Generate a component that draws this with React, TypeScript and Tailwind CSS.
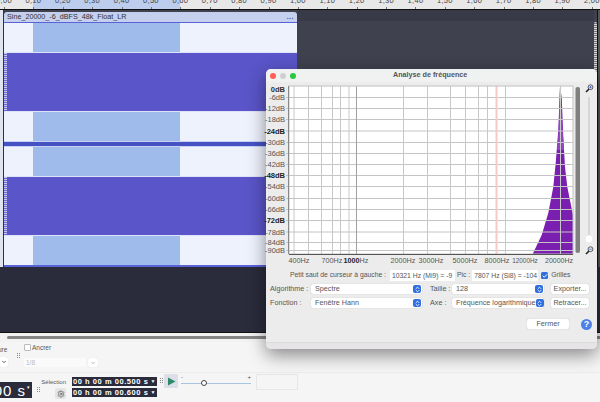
import { ChevronDown, ChevronsUpDown, Check, Settings } from 'lucide-react';

const rulerLabels = ['0,00', '0,10', '0,20', '0,30', '0,40', '0,50', '0,60', '0,70', '0,80', '0,90', '1,00', '1,10', '1,20', '1,30', '1,40', '1,50', '1,60', '1,70', '1,80', '1,90', '2,00'];

const dbLines = [
  { y: 97.5, label: '-6dB' }, { y: 108.5, label: '-12dB' }, { y: 119.5, label: '-18dB' }, { y: 131, label: '-24dB', bold: true },
  { y: 142.5, label: '-30dB' }, { y: 153.5, label: '-36dB' }, { y: 164.5, label: '-42dB' }, { y: 175.5, label: '-48dB', bold: true },
  { y: 186.5, label: '-54dB' }, { y: 198.5, label: '-60dB' }, { y: 209.5, label: '-66dB' }, { y: 220.5, label: '-72dB', bold: true },
  { y: 232, label: '-78dB' }, { y: 242.5, label: '-84dB' }, { y: 250.5, label: '-90dB' },
];

const freqLines = [294, 308.5, 321.5, 332.5, 340.5, 349, 403.5, 427.5, 450.5, 465.5, 478.5, 487.5, 505.5, 560.5];

const freqLabels = [
  { x: 299, label: '400Hz', size: 7.2 }, { x: 332, label: '700Hz', size: 7.2 }, { x: 356, label: '1000', tail: 'Hz', size: 7.2 }, { x: 403, label: '2000Hz', size: 7.2 },
  { x: 431, label: '3000Hz', size: 7.2 }, { x: 465, label: '5000Hz', size: 7.2 }, { x: 497, label: '8000Hz', size: 7.2 }, { x: 525, label: '12000Hz', size: 6.4 }, { x: 559, label: '20000Hz', size: 7 },
];

function Channel() {
  const strip = (
    <div className="flex h-[29px] bg-[#eef2fd]">
      <div className="w-[29px]" />
      <div className="w-[147px] bg-[#9fbbec]" />
    </div>
  );
  return (
    <div className="flex flex-col">
      {strip}
      <div className="h-px bg-[#dfe4fa]" />
      <div className="relative h-[58px] bg-[#5a55c8]">
        <div className="absolute left-0 top-0 h-full w-[3px] bg-[repeating-linear-gradient(to_bottom,#c9c9ee_0,#c9c9ee_1px,#6d69d0_1px,#6d69d0_2px)]" />
      </div>
      <div className="h-px bg-[#dfe4fa]" />
      {strip}
    </div>
  );
}

function MacSelect({ label, value, labelWidth, width }: { label: string; value: string; labelWidth: string; width: string }) {
  return (
    <div className="flex items-center">
      <span className={`${labelWidth} text-[#555]`}>{label}</span>
      <div className={`${width} flex h-[10px] items-center justify-between rounded-[2px] bg-white pl-[4px] pr-[1px] shadow-[0_0_1px_#aaa]`}>
        <span className="whitespace-nowrap text-[#555]">{value}</span>
        <span className="flex h-[8px] w-[8px] shrink-0 items-center justify-center rounded-[2px] bg-[#2f6fe0]">
          <ChevronsUpDown size={7} strokeWidth={3} className="text-white" />
        </span>
      </div>
    </div>
  );
}

function MacButton({ label, width }: { label: string; width: string }) {
  return (
    <div className={`${width} flex h-[10px] items-center justify-center rounded-[2px] bg-white text-[#555] shadow-[0_0_1px_#aaa]`}>
      {label}
    </div>
  );
}

function Grip() {
  return (
    <div className="grid grid-cols-2 gap-[1px]">
      {[0, 1, 2, 3, 4, 5].map((i) => (
        <span key={i} className="h-px w-px bg-[#8a8a8a]" />
      ))}
    </div>
  );
}

function Spectrum() {
  return (
    <svg width="600" height="280" viewBox="0 0 600 280" className="absolute left-[-266px] top-[-69px]" fontFamily="'Liberation Sans', sans-serif" fontSize="7.5">
      <rect x="289" y="86" width="284" height="168" fill="#ffffff" />
      <polygon
        points="560,87 558.3,130 555.7,163 553.3,187 548.3,213 541.7,235 532.7,254 573,254 573,215 567.3,187 565,167 563.3,137 561.7,97"
        fill="#7a1fb0"
      />
      <polygon points="560,87 558.6,130 557,150 564,150 562.6,130 561,97" fill="#9246c4" />
      {dbLines.map((d) => (
        <line key={d.y} x1="286" x2="573" y1={d.y} y2={d.y} stroke="#c4c4c4" />
      ))}
      {freqLines.map((x) => (
        <line key={x} x1={x} x2={x} y1="86" y2="254" stroke="#c8c8c8" />
      ))}
      <line x1="356.5" x2="356.5" y1="86" y2="254" stroke="#a0a0a0" />
      <line x1="496.5" x2="496.5" y1="86" y2="254" stroke="#f7c9c9" strokeWidth="2" />
      <rect x="289" y="86" width="284" height="168" fill="none" stroke="#c0c0c0" />
      <line x1="289" x2="573" y1="254.5" y2="254.5" stroke="#555" />
      <line x1="288.5" x2="288.5" y1="86" y2="254" stroke="#888" />
      <text x="285" y="92" textAnchor="end" fill="#333" fontWeight="bold">0dB</text>
      {dbLines.map((d) => (
        <text key={d.label} x="285" y={d.y + 2.5} textAnchor="end" fill={d.bold ? '#222' : '#555'} fontWeight={d.bold ? 'bold' : 'normal'}>{d.label}</text>
      ))}
      {freqLabels.map((f) => (
        <text key={f.x} x={f.x} y="263" textAnchor="middle" fill="#555" fontSize={f.size}>
          {f.tail ? <tspan fontWeight="bold" fill="#222">{f.label}</tspan> : f.label}
          {f.tail}
        </text>
      ))}
      <rect x="575.5" y="87" width="4.5" height="166" rx="2" fill="#808080" />
      <line x1="589" x2="589" y1="97" y2="240" stroke="#cfcfcf" strokeWidth="1.5" />
      <circle cx="589" cy="239" r="4" fill="#ffffff" stroke="#dddddd" strokeWidth="0.5" />
    </svg>
  );
}

function Magnifier({ minus }: { minus?: boolean }) {
  return (
    <svg width="9" height="9" viewBox="0 0 9 9">
      <line x1="1" y1="8" x2="4" y2="5" stroke="#222" strokeWidth="1.6" />
      <circle cx="5.5" cy="3.2" r="2.4" fill="#e8eefc" stroke="#333" strokeWidth="0.8" />
      <line x1="4.3" y1="3.2" x2="6.7" y2="3.2" stroke="#2546b0" strokeWidth="0.7" />
      {!minus && <line x1="5.5" y1="2" x2="5.5" y2="4.4" stroke="#2546b0" strokeWidth="0.7" />}
    </svg>
  );
}

export default function App() {
  return (
    <div className="relative flex h-[402px] w-[600px] flex-col overflow-hidden bg-[#f5f5f5] font-['Liberation_Sans',sans-serif]">
      {/* time ruler */}
      <div className="relative h-[9px] shrink-0 overflow-hidden bg-[#e8e8e8]">
        <div className="absolute left-[33px] top-0 h-full w-[147px] bg-[#bccdee]" />
        <div className="relative ml-[-10.7px] flex">
          {rulerLabels.map((label) => (
            <div key={label} className="relative flex h-[9px] w-[29.4px] shrink-0 justify-center">
              <span className="mt-[-4px] text-[7.5px] leading-[9px] tracking-[0.3px] text-[#444]">{label}</span>
              <span className="absolute bottom-0 left-1/2 h-[2px] w-px bg-[#777]" />
            </div>
          ))}
        </div>
      </div>

      {/* project area */}
      <div className="flex h-[324px] shrink-0 flex-col border-y border-[#111] bg-[#2a2b3b]">
        <div className="flex h-[257px] bg-[#3f414f]">
          <div className="h-full w-[4px] shrink-0 border-r border-[#333] bg-[#dfe4ef]" />
          <div className="flex w-[293px] shrink-0 flex-col pt-[2px]">
            <div className="flex h-[9.5px] items-center justify-between rounded-t-[3px] bg-[#c5cfee] pl-[3px] pr-[3px]">
              <span className="text-[7.2px] leading-none text-[#333]">Sine_20000_-6_dBFS_48k_Float_LR</span>
              <span className="text-[7px] font-bold leading-none tracking-[0.5px] text-[#555]">...</span>
            </div>
            <div className="h-[1.5px] bg-[#5a62d8]" />
            <Channel />
            <div className="h-[1px] bg-[#c8d0f5]" />
            <div className="h-[4px] bg-[#4552c4]" />
            <div className="h-[1px] bg-[#c8d0f5]" />
            <Channel />
            <div className="h-[2px] bg-[#5a62d8]" />
          </div>
          <div className="flex-1 bg-[#3f414f]">
            <div className="h-[11px] bg-[#383a47]" />
          </div>
          <div className="mt-[12px] h-[245px] w-[3px] shrink-0 rounded-t-[2px] bg-[repeating-linear-gradient(to_bottom,#d5d5d5_0,#d5d5d5_1px,#777_1px,#777_2px)]" />
          <div className="w-[3px] shrink-0 border-l border-[#111] bg-[#555]" />
        </div>
      </div>

      {/* horizontal scrollbar */}
      <div className="flex h-[9px] shrink-0 items-center bg-[#f2f2f2] pl-[7px]">
        <div className="h-[3.5px] w-full rounded-l-[2px] bg-[#858585]" />
      </div>

      {/* toolbars */}
      <div className="flex h-[60px] flex-col text-[6.5px] text-[#555]">
        <div className="flex h-[31px] border-b border-[#ececec]">
          <div className="flex w-[17px] shrink-0 flex-col pt-[4px]">
            <span className="ml-[-2px] leading-[8px]">ure</span>
            <div className="mt-[3px] flex h-[10px] w-[8px] items-center justify-center rounded-r-[2px] bg-white shadow-[0_0_1px_#ccc]">
              <ChevronDown size={6} strokeWidth={3} className="text-[#333]" />
            </div>
          </div>
          <div className="mt-[11px]"><Grip /></div>
          <div className="ml-[4px] flex flex-col">
            <div className="flex items-start pt-[2px]">
              <span className="h-[7px] w-[7px] rounded-[1px] border border-[#bbb] bg-white" />
              <span className="ml-[1px] leading-[8px]">Ancrer</span>
            </div>
            <div className="mt-[6px] flex items-center">
              <div className="flex h-[9px] w-[62px] items-center rounded-[1px] bg-[#fafafa] pl-[2px] text-[#bbb]">1/8</div>
              <div className="ml-[2px] flex h-[9px] w-[10px] items-center justify-center rounded-[2px] bg-white shadow-[0_0_1px_#ccc]">
                <ChevronDown size={6} strokeWidth={2.5} className="text-[#999]" />
              </div>
            </div>
          </div>
        </div>
        <div className="flex flex-1 items-start">
          <div className="mt-[9px] flex h-[16px] w-[32px] shrink-0 items-center justify-end overflow-hidden bg-[#2a2b3b] pr-[1px] text-[15px] leading-none tracking-[1px] text-white">
            <span className="whitespace-nowrap">00 s</span><span className="mb-[6px] ml-[1px] text-[5px]">▾</span>
          </div>
          <div className="ml-[5px] mt-[14px]"><Grip /></div>
          <div className="ml-[3px] mt-[5px] flex w-[26px] shrink-0 flex-col items-end">
            <span className="mr-[3px] text-[6px] leading-[8px] whitespace-nowrap">Sélection</span>
            <div className="mt-[2px] mr-[3px] flex h-[11px] w-[11px] items-center justify-center rounded-[2px] bg-[#e4e4e4]">
              <Settings size={8} className="text-[#555]" />
            </div>
          </div>
          <div className="ml-[3px] mt-[4px] flex w-[85px] shrink-0 flex-col gap-[2px]">
            {['00 h 00 m 00.500 s', '00 h 00 m 00.600 s'].map((time) => (
              <div key={time} className="flex h-[9px] items-center justify-between bg-[#2a2b3b] pl-[1px] pr-[1px] text-[7.5px] font-bold tracking-[0.55px] text-white">
                <span className="whitespace-nowrap">{time}</span>
                <span className="text-[5px]">▼</span>
              </div>
            ))}
          </div>
          <div className="ml-[3px] mt-[5px]"><Grip /></div>
          <div className="ml-[1px] mt-[1px] flex h-[14px] w-[14px] shrink-0 items-center justify-center rounded-[1px] bg-[#dcdfe8]">
            <svg width="9" height="9" viewBox="0 0 9 9"><polygon points="1,0.5 8.5,4.5 1,8.5" fill="#2e8b6a" /></svg>
          </div>
          <div className="relative ml-[3px] mt-[2px] h-[14px] w-[70px] shrink-0">
            <span className="absolute left-0 top-[-1px] text-[6px] leading-none">-</span>
            <span className="absolute right-0 top-[-1px] text-[6px] leading-none">+</span>
            <div className="absolute left-0 right-0 top-[8px] h-px bg-[#a8c4e0]" />
            <span className="absolute left-[20px] top-[5px] h-[6px] w-[6px] rounded-full border border-[#444] bg-white" />
          </div>
          <div className="ml-[5px] mt-[1px] h-[16px] w-[42px] shrink-0 rounded-[1px] border border-[#e6e6e6]" />
        </div>
      </div>

      {/* frequency analysis window */}
      <div className="absolute left-[266px] top-[69px] flex h-[280px] w-[331px] flex-col overflow-visible rounded-[5px] bg-[#ececec] text-[7.2px] shadow-[0_6px_18px_rgba(0,0,0,0.45)]">
        <div className="flex h-[13px] shrink-0 items-center rounded-t-[5px] bg-[#f0f2f2] pl-[4px]">
          <div className="flex gap-[4px]">
            <span className="h-[6px] w-[6px] rounded-full bg-[#ff5f57]" />
            <span className="h-[6px] w-[6px] rounded-full bg-[#cfcfcf]" />
            <span className="h-[6px] w-[6px] rounded-full bg-[#28c840]" />
          </div>
          <span className="ml-[97px] font-bold text-[#555]">Analyse de fréquence</span>
        </div>
        <div className="relative h-[186px] shrink-0">
          <div className="absolute left-0 top-[-13px]"><Spectrum /></div>
          <div className="absolute left-[319px] top-[2px]"><Magnifier /></div>
          <div className="absolute left-[319px] top-[164px]"><Magnifier minus /></div>
        </div>
        <div className="ml-[24px] mt-[2px] flex h-[11px] items-center text-[6.8px] text-[#555]">
          <span className="w-[100px] shrink-0 whitespace-nowrap">Petit saut de curseur à gauche :</span>
          <div className="h-[11px] w-[65px] shrink-0 overflow-hidden whitespace-nowrap bg-white pl-[2px] leading-[11px]">10321 Hz (Mi9) = -9</div>
          <span className="ml-[2px] whitespace-nowrap">Pic :</span>
          <div className="ml-[2px] h-[11px] w-[66px] shrink-0 overflow-hidden whitespace-nowrap bg-white pl-[2px] leading-[11px]">7807 Hz (Si8) = -104</div>
          <span className="ml-[3px] flex h-[7px] w-[7px] shrink-0 items-center justify-center rounded-[1.5px] bg-[#2f6fe0]">
            <Check size={6} strokeWidth={4} className="text-white" />
          </span>
          <span className="ml-[3px]">Grilles</span>
        </div>
        <div className="ml-[4px] mt-[3px] flex flex-col gap-[3px]">
          <div className="flex items-center">
            <MacSelect label="Algorithme :" value="Spectre" labelWidth="w-[41px]" width="w-[111px]" />
            <div className="ml-[8px]"><MacSelect label="Taille :" value="128" labelWidth="w-[22px]" width="w-[92px]" /></div>
            <div className="ml-[7px]"><MacButton label="Exporter..." width="w-[38px]" /></div>
          </div>
          <div className="flex items-center">
            <MacSelect label="Fonction :" value="Fenêtre Hann" labelWidth="w-[41px]" width="w-[111px]" />
            <div className="ml-[8px]"><MacSelect label="Axe :" value="Fréquence logarithmique" labelWidth="w-[22px]" width="w-[92px]" /></div>
            <div className="ml-[7px]"><MacButton label="Retracer..." width="w-[38px]" /></div>
          </div>
        </div>
        <div className="mt-[10px] flex items-center justify-end pr-[5px]">
          <MacButton label="Fermer" width="w-[42px]" />
          <span className="ml-[12px] flex h-[11px] w-[11px] items-center justify-center rounded-full bg-[#4a80e8] text-[9px] font-bold leading-none text-white">?</span>
        </div>
        <div className="mt-auto h-[7px] rounded-b-[5px] border-t border-[#dcdcdc] bg-[#e6e4e6]" />
      </div>
    </div>
  );
}
